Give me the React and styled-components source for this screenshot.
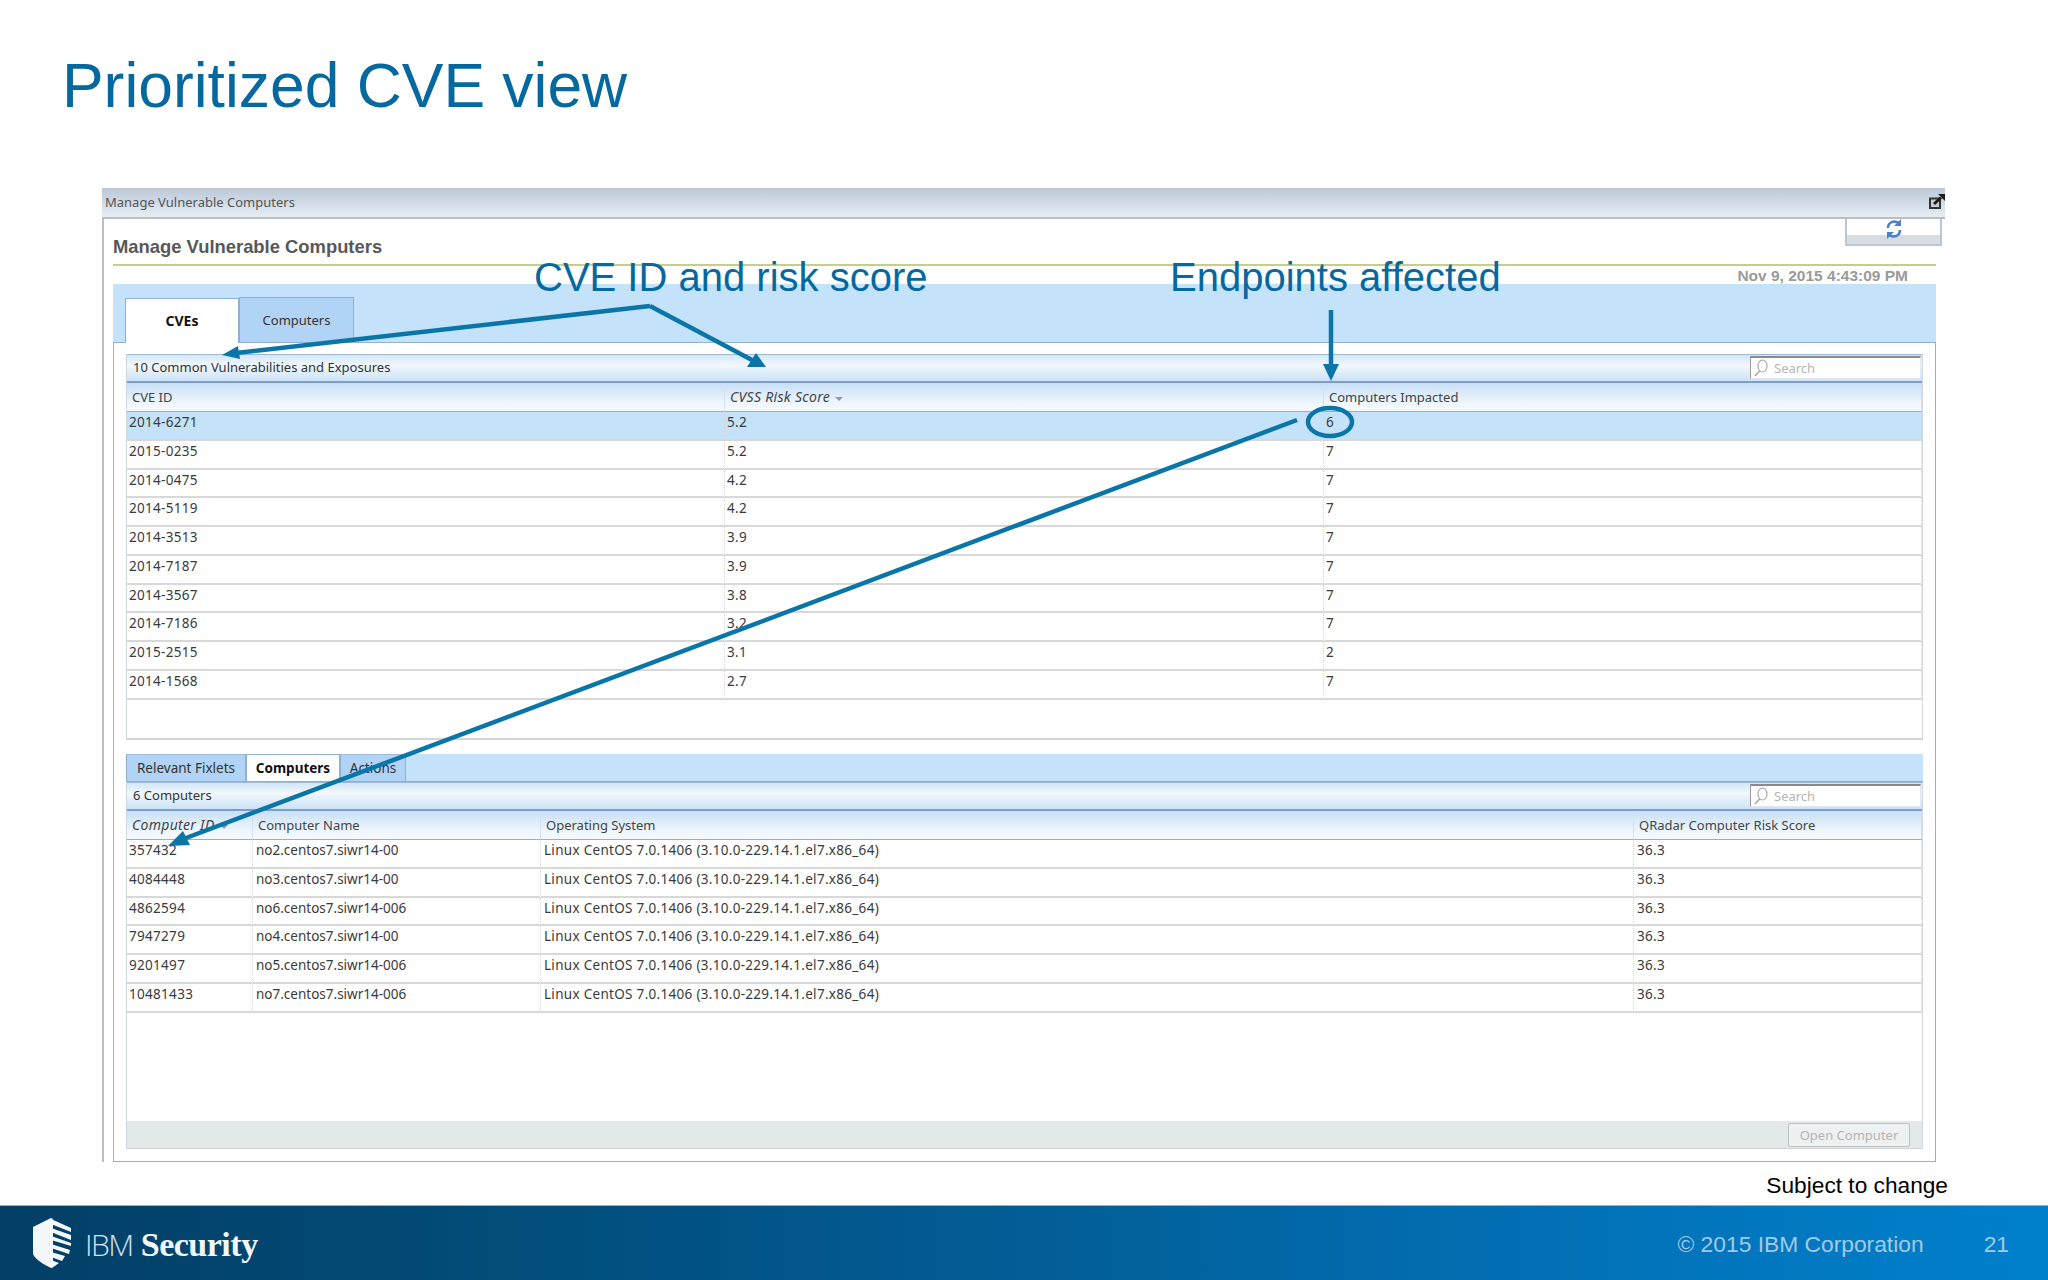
import React from 'react';
import styled, { createGlobalStyle } from 'styled-components';

const Global = createGlobalStyle`
    html, body {
        margin: 0;
        padding: 0;
        background: #fff;
    }
`;

const Slide = styled.div`
    position: relative;
    width: 2048px;
    height: 1280px;
    overflow: hidden;
    background: #fff;
    font-family: "Liberation Sans", Arial, sans-serif;
    display: flex;
    flex-direction: column;
`;

const TitleArea = styled.header`
    height: 188px;
    padding: 47px 0 0 62px;
    box-sizing: border-box;
`;

const Title = styled.h1`
    margin: 0;
    font-size: 62.4px;
    line-height: 78px;
    font-weight: 400;
    color: #05689f;
`;

/* the embedded application window */
const Window = styled.section`
    margin-left: 102px;
    width: 1843px;
    font-family: "Noto Sans", Tahoma, sans-serif;
`;

const TitleBar = styled.div`
    height: 29px;
    display: flex;
    align-items: center;
    justify-content: space-between;
    padding: 0 0 2px 3px;
    box-sizing: border-box;
    background: linear-gradient(#bcc8d8, #dbe4ee 75%, #e6edf4);
    font-size: 13px;
    color: #555;
`;

const Body = styled.div`
    height: 945px;
    box-sizing: border-box;
    border-top: 2px solid #bdbdbd;
    border-left: 2px solid #bdbdbd;
    padding: 0 9px;
    display: flex;
    flex-direction: column;
`;

const HeadingRow = styled.div`
    height: 45px;
    display: flex;
    justify-content: space-between;
    align-items: flex-start;
`;

const Heading = styled.h2`
    margin: 17px 0 0;
    font-family: "Liberation Sans", Arial, sans-serif;
    font-size: 18.4px;
    line-height: 22px;
    font-weight: 700;
    color: #58585a;
`;

const RefreshBox = styled.div`
    width: 97px;
    height: 27px;
    box-sizing: border-box;
    margin-right: -6px;
    border: 2px solid #b9c7d8;
    border-top: none;
    background: linear-gradient(#fff 62%, #d8dde0 62%);
    display: flex;
    justify-content: center;
`;

const GreenRule = styled.div`
    height: 2px;
    background: #c4cf8c;
`;

const DateRow = styled.div`
    height: 18px;
    display: flex;
    justify-content: flex-end;
    padding-right: 28px;
    font-family: "Liberation Sans", Arial, sans-serif;
    font-size: 15.5px;
    line-height: 20px;
    font-weight: 700;
    color: #9a9a9a;
    position: relative;
    z-index: 1;
`;

const TabBand = styled.div`
    height: 58px;
    box-sizing: border-box;
    padding-left: 12px;
    background: #c5e2fb;
    display: flex;
    align-items: flex-end;
`;

const MainTab = styled.div`
    width: ${p => p.$w}px;
    height: 45px;
    box-sizing: border-box;
    display: flex;
    align-items: center;
    justify-content: center;
    padding-bottom: ${p => (p.$active ? '2px' : '0')};
    border: 1px solid #8fb0d0;
    border-bottom: none;
    font-size: ${p => (p.$active ? '14px' : '13px')};
    color: ${p => (p.$active ? '#111' : '#333')};
    font-weight: ${p => (p.$active ? 700 : 400)};
    background: ${p => (p.$active ? '#fff' : '#b0d3f6')};
    margin-bottom: ${p => (p.$active ? '-1px' : '0')};
    position: relative;
`;

const Panel = styled.div`
    height: 820px;
    box-sizing: border-box;
    border: 1px solid #93b1d2;
    padding: 11px 12px 12px;
    display: flex;
    flex-direction: column;
`;

const Grid = styled.div`
    height: ${p => p.$h}px;
    box-sizing: border-box;
    margin-bottom: ${p => p.$mb || 0}px;
    border-left: 1px solid #cfd6dd;
    border-right: 1px solid #cfd6dd;
    border-bottom: 2px solid #d4d4d4;
`;

const Toolbar = styled.div`
    height: 29px;
    box-sizing: border-box;
    display: flex;
    align-items: center;
    justify-content: space-between;
    padding: 0 1px 2px 6px;
    border-top: 1px solid #9db9d6;
    border-bottom: 2px solid #7f9fc0;
    background: linear-gradient(#d3e6f9, #f2f8fd 40%, #cbe2f8);
    font-size: 13px;
    color: #333;
`;

const SearchBox = styled.div`
    width: 171px;
    height: 23px;
    box-sizing: border-box;
    border-top: 2px solid #8a8a8a;
    border-left: 1px solid #9a9a9a;
    border-right: 1px solid #dfe8f0;
    border-bottom: 1px solid #dfe8f0;
    background: #fff;
    display: flex;
    align-items: center;
    gap: 6px;
    padding-left: 3px;
    font-size: 13px;
    color: #b5b5b5;
`;

const Row = styled.div`
    display: grid;
    grid-template-columns: ${p => p.$cols};
`;

const HeadCell = styled.div`
    height: 29px;
    box-sizing: border-box;
    padding-left: 5px;
    border-right: 1px solid #d3e0ee;
    border-bottom: 1px solid #8fb0d0;
    background: linear-gradient(#c8dff6, #eef6fd 70%, #f6fafe);
    font-size: ${p => (p.$sorted ? '14px' : '13px')};
    letter-spacing: ${p => (p.$sorted ? '0.3px' : '0')};
    line-height: 28px;
    color: #444;
    font-style: ${p => (p.$sorted ? 'italic' : 'normal')};
    white-space: nowrap;
`;

const SortMark = styled.span`
    display: inline-block;
    margin-left: 5px;
    vertical-align: 1px;
    border-left: 4px solid transparent;
    border-right: 4px solid transparent;
    border-top: 4px solid #8d9aa8;
`;

const Cell = styled.div`
    height: 28.75px;
    box-sizing: border-box;
    padding-left: ${p => p.$pad || 2}px;
    border-right: 1px dotted #d6d6d6;
    border-bottom: 2px solid #d8d8d8;
    background: ${p => (p.$selected ? '#c5e2fb' : '#fff')};
    font-size: 13.5px;
    letter-spacing: ${p => (p.$digits ? '0.3px' : '0')};
    line-height: 20px;
    color: #3a3a3a;
    white-space: nowrap;
`;

const SubStrip = styled.div`
    height: 28px;
    box-sizing: border-box;
    display: flex;
    border-bottom: 1px solid #8fb0d0;
    background: #c5e2fb;
`;

const SubTab = styled.div`
    width: ${p => p.$w}px;
    box-sizing: border-box;
    display: flex;
    align-items: center;
    justify-content: center;
    border: 1px solid #8fb0d0;
    border-top: ${p => (p.$active ? '1px solid #8fb0d0' : '1px solid #9dbbdb')};
    border-bottom: none;
    background: ${p => (p.$active ? '#fff' : '#b0d3f6')};
    font-size: 13.5px;
    font-weight: ${p => (p.$active ? 700 : 400)};
    color: ${p => (p.$active ? '#111' : '#333')};
`;

const LowerBody = styled.div`
    flex: 1;
    display: flex;
    flex-direction: column;
    box-sizing: border-box;
    border-left: 1px solid #cfd6dd;
    border-right: 1px solid #cfd6dd;
`;

const Spacer = styled.div`
    flex: 1;
`;

const ButtonBar = styled.div`
    height: 28px;
    box-sizing: border-box;
    display: flex;
    align-items: center;
    justify-content: flex-end;
    padding-right: 12px;
    border-bottom: 1px solid #cfd3d3;
    background: #e3e9e9;
`;

const DisabledButton = styled.button`
    width: 122px;
    height: 24px;
    padding: 0;
    border: 1px solid #bcc0c0;
    border-radius: 2px;
    background: #eef1f1;
    font-family: "Noto Sans", Tahoma, sans-serif;
    font-size: 13px;
    color: #b4b4b4;
`;

const Note = styled.div`
    height: 43px;
    box-sizing: border-box;
    padding: 8px 100px 0 0;
    text-align: right;
    font-size: 22.7px;
    line-height: 30px;
    color: #000;
`;

const Footer = styled.footer`
    height: 75px;
    box-sizing: border-box;
    border-top: 1px solid #8fb4cc;
    background: linear-gradient(90deg, #033f66 0%, #024a75 20%, #035d96 50%, #0270b5 75%, #0080cc 100%);
    display: flex;
    align-items: center;
    justify-content: space-between;
    padding: 0 39px 0 33px;
`;

const Brand = styled.div`
    display: flex;
    align-items: center;
    gap: 14px;
`;

const BrandText = styled.div`
    display: flex;
    align-items: baseline;
    gap: 8px;
    font-family: "Open Sans", "Liberation Sans", sans-serif;
    font-weight: 300;
    font-size: 30px;
    letter-spacing: -1.5px;
    color: #cfe3f0;
    margin-top: 2px;
`;

const BrandBold = styled.span`
    font-family: "Liberation Serif", Georgia, serif;
    font-weight: 700;
    font-size: 34px;
    letter-spacing: -0.5px;
    color: #f2f7fa;
`;

const FooterRight = styled.div`
    display: flex;
    align-items: center;
    gap: 60px;
    margin-top: 3px;
    font-size: 22.8px;
    color: #a3c9e3;
`;

const Callout = styled.div`
    position: absolute;
    left: ${p => p.$x}px;
    top: 253px;
    font-size: 40px;
    line-height: 48px;
    color: #05689f;
    white-space: nowrap;
`;

const Annotations = styled.svg`
    position: absolute;
    left: 0;
    top: 0;
    pointer-events: none;
`;

const cveCols = '598px 599px 1fr';
const computerCols = '126px 288px 1093px 1fr';

const cves = [
    ['2014-6271', '5.2', '6'],
    ['2015-0235', '5.2', '7'],
    ['2014-0475', '4.2', '7'],
    ['2014-5119', '4.2', '7'],
    ['2014-3513', '3.9', '7'],
    ['2014-7187', '3.9', '7'],
    ['2014-3567', '3.8', '7'],
    ['2014-7186', '3.2', '7'],
    ['2015-2515', '3.1', '2'],
    ['2014-1568', '2.7', '7'],
];

const os = 'Linux CentOS 7.0.1406 (3.10.0-229.14.1.el7.x86_64)';
const computers = [
    ['357432', 'no2.centos7.siwr14-00', os, '36.3'],
    ['4084448', 'no3.centos7.siwr14-00', os, '36.3'],
    ['4862594', 'no6.centos7.siwr14-006', os, '36.3'],
    ['7947279', 'no4.centos7.siwr14-00', os, '36.3'],
    ['9201497', 'no5.centos7.siwr14-006', os, '36.3'],
    ['10481433', 'no7.centos7.siwr14-006', os, '36.3'],
];

const Magnifier = () => (
    <svg width="14" height="18" viewBox="0 0 14 18" fill="none" stroke="#a9a9a9" strokeWidth="1.2">
        <ellipse cx="8.5" cy="7" rx="4.5" ry="6" />
        <path d="M5.5 12 L1 17" strokeWidth="1.6" />
    </svg>
);

const PopoutIcon = () => (
    <svg width="16" height="15" viewBox="0 0 16 15">
        <rect x="1" y="4.5" width="10" height="9.5" fill="#c6ccd2" stroke="#333" strokeWidth="2" />
        <path d="M5 10 L12 3.5" stroke="#1c1c1c" strokeWidth="3" />
        <path d="M9 0 H16 V7 Z" fill="#1c1c1c" />
    </svg>
);

const RefreshIcon = () => (
    <svg width="16" height="20" viewBox="0 0 16 20" fill="none" stroke="#4a82c4" strokeWidth="2.6">
        <path d="M2 9 C2 3 8 1 13 4" />
        <path d="M15 0 V7 H8 Z" fill="#4a82c4" stroke="none" />
        <path d="M14 11 C14 17 8 19 3 16" />
        <path d="M1 20 V13 H8 Z" fill="#4a82c4" stroke="none" />
    </svg>
);

const Shield = () => (
    <svg width="38" height="50" viewBox="0 0 38 50" fill="#f4f8fb">
        <path d="M18 0 L20 1 V43 L18 50 C10 46 3 42 0 36 V9 Z" />
        <path d="M18 1 L38 10 V14 L18 6 Z" />
        <path d="M18 10 L38 17 V22 L18 14 Z" />
        <path d="M18 18 L38 25 V28 L18 22 Z" />
        <path d="M18 26 L37 32 L36 36 L18 30 Z" />
        <path d="M18 34 L32 38 L29 43 L18 39 Z" />
        <path d="M18 42 L26 45 L19 50 L18 50 Z" />
    </svg>
);

const App = () => {
    return (
        <Slide>
            <Global />
            <TitleArea>
                <Title>Prioritized CVE view</Title>
            </TitleArea>

            <Window>
                <TitleBar>
                    Manage Vulnerable Computers
                    <PopoutIcon />
                </TitleBar>
                <Body>
                    <HeadingRow>
                        <Heading>Manage Vulnerable Computers</Heading>
                        <RefreshBox>
                            <RefreshIcon />
                        </RefreshBox>
                    </HeadingRow>
                    <GreenRule />
                    <DateRow>Nov 9, 2015 4:43:09 PM</DateRow>
                    <TabBand>
                        <MainTab $w={114} $active>CVEs</MainTab>
                        <MainTab $w={115}>Computers</MainTab>
                    </TabBand>
                    <Panel>
                        <Grid $h={386} $mb={14}>
                            <Toolbar>
                                10 Common Vulnerabilities and Exposures
                                <SearchBox><Magnifier />Search</SearchBox>
                            </Toolbar>
                            <Row $cols={cveCols}>
                                <HeadCell>CVE ID</HeadCell>
                                <HeadCell $sorted>CVSS Risk Score<SortMark /></HeadCell>
                                <HeadCell>Computers Impacted</HeadCell>
                            </Row>
                            {cves.map((row, i) => (
                                <Row key={row[0]} $cols={cveCols}>
                                    {row.map((v, j) => (
                                        <Cell key={j} $selected={i === 0} $digits>{v}</Cell>
                                    ))}
                                </Row>
                            ))}
                        </Grid>

                        <SubStrip>
                            <SubTab $w={120}>Relevant Fixlets</SubTab>
                            <SubTab $w={94} $active>Computers</SubTab>
                            <SubTab $w={66}>Actions</SubTab>
                        </SubStrip>
                        <LowerBody>
                            <Toolbar>
                                6 Computers
                                <SearchBox><Magnifier />Search</SearchBox>
                            </Toolbar>
                            <Row $cols={computerCols}>
                                <HeadCell $sorted>Computer ID<SortMark /></HeadCell>
                                <HeadCell>Computer Name</HeadCell>
                                <HeadCell>Operating System</HeadCell>
                                <HeadCell>QRadar Computer Risk Score</HeadCell>
                            </Row>
                            {computers.map(row => (
                                <Row key={row[0]} $cols={computerCols}>
                                    {row.map((v, j) => (
                                        <Cell key={j} $pad={j > 0 ? 3 : 2} $digits={j !== 1}>{v}</Cell>
                                    ))}
                                </Row>
                            ))}
                            <Spacer />
                            <ButtonBar>
                                <DisabledButton disabled>Open Computer</DisabledButton>
                            </ButtonBar>
                        </LowerBody>
                    </Panel>
                </Body>
            </Window>

            <Note>Subject to change</Note>

            <Footer>
                <Brand>
                    <Shield />
                    <BrandText>IBM <BrandBold>Security</BrandBold></BrandText>
                </Brand>
                <FooterRight>
                    <span>© 2015 IBM Corporation</span>
                    <span>21</span>
                </FooterRight>
            </Footer>

            <Callout $x={534}>CVE ID and risk score</Callout>
            <Callout $x={1170}>Endpoints affected</Callout>

            <Annotations width="2048" height="1280" viewBox="0 0 2048 1280">
                <g stroke="#0a76a8" strokeWidth="4.5" fill="none">
                    <path d="M650 306 L236 353" />
                    <path d="M650 306 L752 360" />
                    <path d="M1331 310 L1331 366" />
                    <ellipse cx="1330" cy="422" rx="22" ry="14" />
                    <path d="M1297 420 L186 838" />
                </g>
                <g fill="#0a76a8">
                    <path d="M222 355 L238 346 L240 359 Z" />
                    <path d="M766 367 L747 367 L756 353 Z" />
                    <path d="M1331 381 L1323 364 L1339 364 Z" />
                    <path d="M168 846 L183 831 L190 845 Z" />
                </g>
            </Annotations>
        </Slide>
    );
};

export default App;
